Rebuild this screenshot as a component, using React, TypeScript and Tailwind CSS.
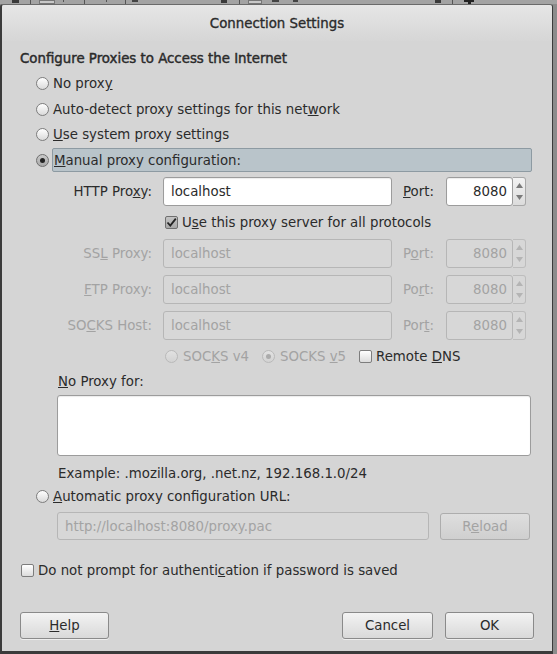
import React from "react";

const TXT = "text-[#2b2b2b]";
const DIS = "text-[#a3a3a3]";

function Radio({ checked = false, disabled = false }: { checked?: boolean; disabled?: boolean }) {
  const base = disabled
    ? "border-[#b9b9b9] bg-gradient-to-b from-[#e2e2e2] to-[#d2d2d2]"
    : checked
    ? "border-[#6f6f6f] bg-gradient-to-b from-[#c9c9c9] to-[#a9a9a9]"
    : "border-[#7d7d7d] bg-gradient-to-b from-white to-[#dadada]";
  return (
    <span className={`w-[13px] h-[13px] rounded-full border shrink-0 flex items-center justify-center ${base}`}>
      {checked && (
        <span className={`w-[5px] h-[5px] rounded-full ${disabled ? "bg-[#ababab]" : "bg-[#222222]"}`} />
      )}
    </span>
  );
}

function Check({ checked = false }: { checked?: boolean }) {
  return (
    <span
      className={`w-[13px] h-[13px] rounded-[2px] border shrink-0 flex items-center justify-center ${
        checked
          ? "border-[#6f6f6f] bg-gradient-to-b from-[#c4c4c4] to-[#a8a8a8]"
          : "border-[#7d7d7d] bg-gradient-to-b from-white to-[#dcdcdc]"
      }`}
    >
      {checked && (
        <svg width="11" height="11" viewBox="0 0 11 11">
          <path d="M1.5 5.5 L4.3 8.5 L9.8 1.6" fill="none" stroke="#222" strokeWidth="1.8" />
        </svg>
      )}
    </span>
  );
}

function Field({
  value,
  disabled = false,
  right = false,
}: {
  value: string;
  disabled?: boolean;
  right?: boolean;
}) {
  return (
    <div
      className={`w-full h-full rounded-[3px] border flex items-center ${
        right ? "justify-end pr-[5px]" : "pl-[7px]"
      } ${
        disabled
          ? `border-[#b6b6b6] bg-[#d7d7d7] ${DIS}`
          : `border-[#9c9c9c] bg-white ${TXT} shadow-[inset_0_1px_1px_rgba(0,0,0,0.08)]`
      }`}
    >
      {value}
    </div>
  );
}

function Spinner({ disabled = false }: { disabled?: boolean }) {
  const c = disabled ? "#b4b4b4" : "#7a7a7a";
  return (
    <div
      className={`w-[13px] h-full rounded-r-[3px] border border-l-0 flex flex-col items-center justify-between py-[5px] ${
        disabled ? "border-[#bdbdbd] bg-[#d7d7d7]" : "border-[#a8a8a8] bg-gradient-to-b from-[#f2f2f2] to-[#dcdcdc]"
      }`}
    >
      <svg width="7" height="5" viewBox="0 0 7 5">
        <path d="M3.5 0 L7 5 L0 5 Z" fill={c} />
      </svg>
      <svg width="7" height="5" viewBox="0 0 7 5">
        <path d="M0 0 L7 0 L3.5 5 Z" fill={c} />
      </svg>
    </div>
  );
}

function Btn({ children, w, disabled = false, ml = "" }: { children: React.ReactNode; w: string; disabled?: boolean; ml?: string }) {
  return (
    <div
      className={`${w} ${ml} h-[27px] rounded-[3px] border flex items-center justify-center ${
        disabled
          ? `border-[#adadad] bg-gradient-to-b from-[#dedede] to-[#cfcfcf] ${DIS}`
          : `border-[#8a8a8a] bg-gradient-to-b from-[#f3f3f3] to-[#d9d9d9] ${TXT} shadow-[0_1px_0_rgba(255,255,255,0.6)]`
      }`}
    >
      {children}
    </div>
  );
}

function ProxyRow({
  label,
  port,
  value,
  disabled,
  mt,
}: {
  label: React.ReactNode;
  port: React.ReactNode;
  value: string;
  disabled: boolean;
  mt: string;
}) {
  const c = disabled ? DIS : TXT;
  return (
    <div className={`flex ${mt} h-[29px] items-center`}>
      <div className={`w-[150px] text-right ${c}`}>{label}</div>
      <div className="ml-[11px] w-[229px] h-full">
        <Field value={value} disabled={disabled} />
      </div>
      <div className={`ml-[11px] w-[43px] ${c}`}>{port}</div>
      <div className="w-[67px] h-full">
        <Field value="8080" disabled={disabled} right />
      </div>
      <Spinner disabled={disabled} />
    </div>
  );
}

export default function App() {
  return (
    <div className="w-[557px] h-[654px] bg-[#8c8c8c] flex flex-col overflow-hidden font-['DejaVu_Sans',sans-serif] text-[13.33px] leading-[17px]">
      {/* background window strip */}
      <div className="h-[4px] bg-[#a3a3a3] flex items-start shrink-0">
        <div className="ml-[12px] w-[7px] h-[3px] bg-[#3a3a3a]" />
        <div className="ml-[11px] w-[1px] h-[4px] bg-[#555]" />
        <div className="ml-[8px] w-[16px] h-[4px] bg-[#c8c8c8] border border-[#777]" />
        <div className="ml-[8px] w-[1px] h-[2px] bg-[#555]" />
        <div className="ml-[20px] w-[1px] h-[4px] bg-[#555]" />
        <div className="ml-[21px] w-[1px] h-[2px] bg-[#555]" />
        <div className="ml-[18px] w-[1px] h-[4px] bg-[#555]" />
        <div className="ml-[6px] w-[6px] h-[2px] bg-[#444]" />
        <div className="ml-[83px] w-[6px] h-[3px] bg-[#3a3a3a]" />
        <div className="ml-[12px] w-[1px] h-[4px] bg-[#555]" />
        <div className="ml-[8px] w-[14px] h-[4px] bg-[#c8c8c8] border border-[#777]" />
        <div className="ml-[10px] w-[7px] h-[2px] bg-[#444]" />
        <div className="ml-[14px] w-[5px] h-[2px] bg-[#444]" />
        <div className="ml-[137px] w-[6px] h-[3px] bg-[#3a3a3a]" />
        <div className="ml-[11px] w-[1px] h-[4px] bg-[#555]" />
        <div className="ml-[11px] w-[10px] h-[4px] flex flex-col items-center">
          <div className="w-[10px] h-[2px] bg-[#222]" />
          <div className="w-[3px] h-[2px] bg-[#222]" />
        </div>
      </div>
      {/* dialog */}
      <div className="w-[553px] flex-1 flex flex-col border-l-2 border-r border-b-[3px] border-t border-[#3b3b3b] border-t-[#6a6a6a] bg-[#d5d5d5] rounded-t-[3px]">
        <div className="h-[36px] shrink-0 flex items-center justify-center bg-gradient-to-b from-[#e6e6e6] to-[#d6d6d6] rounded-t-[3px]">
          <span className={`${TXT} [-webkit-text-stroke:0.35px_#2b2b2b]`}>Connection Settings</span>
        </div>

        <div className={`ml-[18px] mt-[9px] h-[17px] ${TXT} [-webkit-text-stroke:0.45px_#2b2b2b]`}>
          Configure Proxies to Access the Internet
        </div>

        <div className={`ml-[34px] mt-[4px] h-[25px] flex items-center gap-[4px] ${TXT}`}>
          <Radio />
          <span>
            No prox<span className="underline">y</span>
          </span>
        </div>
        <div className={`ml-[34px] h-[26px] flex items-center gap-[4px] ${TXT}`}>
          <Radio />
          <span>
            Auto-detect proxy settings for this net<span className="underline">w</span>ork
          </span>
        </div>
        <div className={`ml-[34px] h-[25px] flex items-center gap-[4px] ${TXT}`}>
          <Radio />
          <span>
            <span className="underline">U</span>se system proxy settings
          </span>
        </div>
        <div className={`ml-[34px] mt-[1px] h-[24px] flex items-center ${TXT}`}>
          <Radio checked />
          <div className="ml-[3px] w-[480px] h-full rounded-[2px] border border-[#8d9aa2] bg-[#b9c4ca] flex items-center pl-[1px]">
            <span>
              <span className="underline">M</span>anual proxy configuration:
            </span>
          </div>
        </div>

        <ProxyRow
          mt="mt-[5px]"
          disabled={false}
          value="localhost"
          label={
            <>
              HTTP Pro<span className="underline">x</span>y:
            </>
          }
          port={
            <>
              <span className="underline">P</span>ort:
            </>
          }
        />

        <div className={`ml-[163px] h-[33px] flex items-center gap-[4px] ${TXT}`}>
          <Check checked />
          <span>
            U<span className="underline">s</span>e this proxy server for all protocols
          </span>
        </div>

        <ProxyRow
          mt="mt-0"
          disabled
          value="localhost"
          label={
            <>
              SS<span className="underline">L</span> Proxy:
            </>
          }
          port={
            <>
              P<span className="underline">o</span>rt:
            </>
          }
        />
        <ProxyRow
          mt="mt-[7px]"
          disabled
          value="localhost"
          label={
            <>
              <span className="underline">F</span>TP Proxy:
            </>
          }
          port={
            <>
              Po<span className="underline">r</span>t:
            </>
          }
        />
        <ProxyRow
          mt="mt-[7px]"
          disabled
          value="localhost"
          label={
            <>
              SO<span className="underline">C</span>KS Host:
            </>
          }
          port={
            <>
              Por<span className="underline">t</span>:
            </>
          }
        />

        <div className="ml-[163px] h-[32px] flex items-center">
          <div className={`w-[97px] flex items-center gap-[5px] ${DIS}`}>
            <Radio disabled />
            <span>
              SOC<span className="underline">K</span>S v4
            </span>
          </div>
          <div className={`w-[97px] flex items-center gap-[5px] ${DIS}`}>
            <Radio disabled checked />
            <span>
              SOCKS <span className="underline">v</span>5
            </span>
          </div>
          <div className={`flex items-center gap-[4px] ${TXT}`}>
            <Check />
            <span>
              Remote <span className="underline">D</span>NS
            </span>
          </div>
        </div>

        <div className={`ml-[56px] h-[18px] flex items-center ${TXT}`}>
          <span>
            <span className="underline">N</span>o Proxy for:
          </span>
        </div>
        <div className="ml-[55px] mt-[5px] w-[474px] h-[61px] rounded-[3px] border border-[#9c9c9c] bg-white shadow-[inset_0_1px_1px_rgba(0,0,0,0.08)]" />

        <div className={`ml-[56px] mt-[8px] h-[18px] flex items-center ${TXT}`}>
          Example: .mozilla.org, .net.nz, 192.168.1.0/24
        </div>

        <div className={`ml-[34px] mt-[2px] h-[24px] flex items-center gap-[4px] ${TXT}`}>
          <Radio />
          <span>
            <span className="underline">A</span>utomatic proxy configuration URL:
          </span>
        </div>

        <div className="ml-[55px] mt-[4px] h-[28px] flex items-center">
          <div className="w-[372px] h-full">
            <Field value="http://localhost:8080/proxy.pac" disabled />
          </div>
          <Btn w="w-[90px]" ml="ml-[11px]" disabled>
            <span>
              R<span className="underline">e</span>load
            </span>
          </Btn>
        </div>

        <div className={`ml-[19px] mt-[21px] h-[18px] flex items-center gap-[4px] ${TXT}`}>
          <Check />
          <span>
            Do not prompt for authenti<span className="underline">c</span>ation if password is saved
          </span>
        </div>

        <div className="ml-[18px] mt-[33px] flex items-center">
          <Btn w="w-[89px]">
            <span>
              <span className="underline">H</span>elp
            </span>
          </Btn>
          <Btn w="w-[91px]" ml="ml-[233px]">
            Cancel
          </Btn>
          <Btn w="w-[89px]" ml="ml-[12px]">
            OK
          </Btn>
        </div>
      </div>
    </div>
  );
}
